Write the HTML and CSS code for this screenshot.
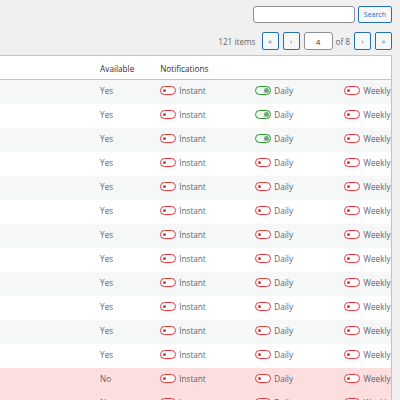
FILE: index.html
```html
<!DOCTYPE html>
<html lang="en">
<head>
  <meta charset="UTF-8" />
  <meta name="viewport" content="width=device-width, initial-scale=1.0"/>
  <title>Subscribers</title>
  <link rel="stylesheet" href="styles.css">
</head>
<body>
  <div class="tablenav">
    <div class="search-box">
      <input class="search-input" type="search">
      <button class="button">Search</button>
    </div>
    <div class="pagination">
      <span class="count">121 items</span>
      <button class="button page-btn">&laquo;</button>
      <button class="button page-btn">&lsaquo;</button>
      <input class="page-input" type="text" value="4">
      <span class="of">of 8</span>
      <button class="button page-btn">&rsaquo;</button>
      <button class="button page-btn">&raquo;</button>
    </div>
  </div>

  <table class="list-table">
    <colgroup>
      <col class="col-name">
      <col class="col-avail">
      <col class="col-instant">
      <col class="col-daily">
      <col class="col-weekly">
    </colgroup>
    <thead>
      <tr>
        <th></th>
        <th>Available</th>
        <th>Notifications</th>
        <th></th>
        <th></th>
      </tr>
    </thead>
    <tbody id="rows"></tbody>
  </table>

  <script>
    // available, daily on
    const subscribers = [
      ['Yes', true], ['Yes', true], ['Yes', true], ['Yes', false],
      ['Yes', false], ['Yes', false], ['Yes', false], ['Yes', false],
      ['Yes', false], ['Yes', false], ['Yes', false], ['Yes', false],
      ['No', false], ['No', false]
    ];

    function toggle(on, label) {
      return '<span class="switch' + (on ? ' on' : '') + '"><i></i></span>' + label;
    }

    const body = document.getElementById('rows');
    subscribers.forEach(function (s, i) {
      const tr = document.createElement('tr');
      if (s[0] === 'No') tr.className = 'unavailable';
      else if (i % 2 === 0) tr.className = 'alt';
      tr.innerHTML =
        '<td></td>' +
        '<td>' + s[0] + '</td>' +
        '<td>' + toggle(false, 'Instant') + '</td>' +
        '<td>' + toggle(s[1], 'Daily') + '</td>' +
        '<td>' + toggle(false, 'Weekly') + '</td>';
      body.appendChild(tr);
    });
  </script>
</body>
</html>
```

FILE: styles.css
```css
body {
  margin: 0;
  width: 392px;
  background-color: #f0f0f1;
  font-family: 'Open Sans', sans-serif;
  font-size: 8.2px;
  color: #5f656b;
  overflow: hidden;
}

.tablenav {
  display: flex;
  flex-direction: column;
  align-items: flex-end;
  gap: 9px;
  padding-top: 6px;
  margin-bottom: 5px;
}

.search-box {
  display: flex;
  gap: 3px;
}

.search-input {
  width: 102px;
  height: 17px;
  box-sizing: border-box;
  border: 1px solid #8c8f94;
  border-radius: 3px;
  background: white;
  margin: 0;
}

.button {
  height: 17px;
  box-sizing: border-box;
  border: 1px solid #2271b1;
  border-radius: 2px;
  background-color: #f6f7f7;
  color: #2271b1;
  font-family: inherit;
  font-size: 7px;
  padding: 0 5px;
  margin: 0;
}

.pagination {
  display: flex;
  align-items: center;
  gap: 4px;
}

.count {
  margin-right: 2px;
}

.page-btn {
  width: 17px;
  height: 18px;
  padding: 0;
  font-size: 7px;
}

.page-input {
  width: 29px;
  height: 18px;
  box-sizing: border-box;
  border: 1px solid #8c8f94;
  border-radius: 3px;
  background: white;
  text-align: center;
  font-family: inherit;
  font-size: 8px;
  color: #2c3338;
  margin: 0;
}

.of {
  margin: 0 0 0 -1px;
}

.list-table {
  width: 392px;
  table-layout: fixed;
  border-collapse: collapse;
  background: white;
  border-top: 1px solid #c3c4c7;
  border-right: 1px solid #c3c4c7;
}

.col-name { width: 95px; }
.col-avail { width: 60px; }
.col-instant { width: 95px; }
.col-daily { width: 89px; }
.col-weekly { width: 52px; }

.list-table th {
  height: 21px;
  text-align: left;
  font-weight: normal;
  color: #2c3338;
  padding: 2px 0 0 5px;
  border-bottom: 1px solid #c3c4c7;
  white-space: nowrap;
}

.list-table td {
  height: 20px;
  padding: 0 0 4px 5px;
  white-space: nowrap;
  vertical-align: middle;
}

.list-table tr.alt td {
  background-color: #f6f7f7;
}

.list-table tr.unavailable td {
  background-color: #fcdede;
}

.switch {
  display: inline-block;
  position: relative;
  width: 16px;
  height: 9px;
  box-sizing: border-box;
  border: 1.5px solid #e3353a;
  border-radius: 5px;
  background: white;
  margin-right: 3px;
  vertical-align: -1.5px;
}

.switch i {
  position: absolute;
  left: 1.5px;
  top: 1.5px;
  width: 3px;
  height: 3px;
  border-radius: 50%;
  background: #e3353a;
}

.switch.on {
  border-color: #2f8f33;
  background: #eef6ee;
}

.switch.on i {
  left: auto;
  right: 1px;
  top: 0.5px;
  width: 5px;
  height: 5px;
  background: #6cab6e;
}
```
